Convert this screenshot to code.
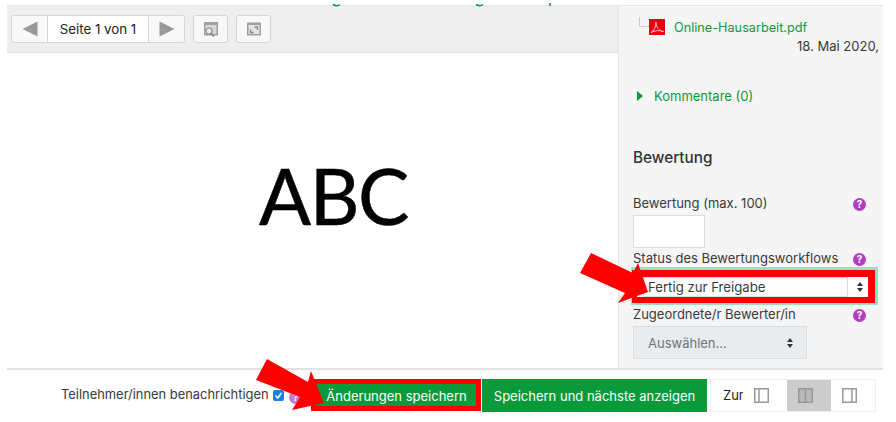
<div class="page">
  <div class="main">
    <section class="viewer">
      <svg class="cutoff" width="230" height="5" viewBox="0 0 230 5" aria-hidden="true">
        <path d="M1 2.500Q5 5 8 2.500M144 2.500Q148 5 151 2.500M218 1V4" stroke="#0a9a3a" stroke-width="1.500" fill="none"/>
      </svg>
      <div class="toolbar">
        <div class="pager">
          <span class="pg-btn">
            <svg width="16" height="16" viewBox="0 0 16 16"><path d="M0.500 8 15.500 0.500V15.500Z" fill="#999"/></svg>
          </span>
          <span class="pg-label">Seite 1 von 1</span>
          <span class="pg-btn">
            <svg width="16" height="16" viewBox="0 0 16 16"><path d="M15.500 8 0.500 0.500V15.500Z" fill="#999"/></svg>
          </span>
        </div>
        <span class="tool">
          <svg width="16" height="16" viewBox="0 0 16 16">
            <rect x="1" y="1" width="14" height="13.500" fill="#a0a0a0"/>
            <rect x="2.500" y="4" width="11" height="9" fill="#d8d8d8"/>
            <circle cx="6" cy="10" r="3" fill="#eee" stroke="#888" stroke-width="1.200"/>
            <path d="M8 12.500 11 15.500" stroke="#888" stroke-width="1.500"/>
          </svg>
        </span>
        <span class="tool">
          <svg width="16" height="16" viewBox="0 0 16 16">
            <rect x="1" y="1.500" width="14" height="13" fill="#a0a0a0"/>
            <rect x="2.500" y="4" width="11" height="9" fill="#e4e4e4"/>
            <path d="M4.500 8.500V11.500H7.500M11.500 9V6H8.500" stroke="#888" stroke-width="1.400" fill="none"/>
          </svg>
        </span>
      </div>
      <div class="paper"><span class="abc">ABC</span></div>
    </section>

    <aside class="panel">
      <div class="file">
        <svg class="tree" width="10" height="11" viewBox="0 0 10 11"><path d="M.500 0V9.500H10" stroke="#ccc" fill="none"/></svg>
        <svg class="pdf" width="16" height="16" viewBox="0 0 16 16">
          <rect width="16" height="16" fill="#e8000f"/>
          <path d="M2 13.500C5 12 7 8 7 3 7 8 10 12 14.500 12.500 10 11 6 11.500 2 13.500Z" fill="none" stroke="#f6c6c6" stroke-width="1"/>
        </svg>
        <a href="#top" class="link file-link">Online-Hausarbeit.pdf</a>
      </div>
      <div class="date">18. Mai 2020,</div>
      <div class="comments">
        <svg width="6" height="10" viewBox="0 0 6 10"><path d="M0 0 6 5 0 10Z" fill="#0a9a3a"/></svg>
        <a href="#top" class="link">Kommentare (0)</a>
      </div>
      <h3>Bewertung</h3>
      <div class="field-head first">
        <span>Bewertung (max. 100)</span>
        <span class="help">?</span>
      </div>
      <div class="grade"></div>
      <div class="field-head status-head">
        <span>Status des Bewertungsworkflows</span>
        <span class="help">?</span>
      </div>
      <div class="select-wrap">
        <div class="status-select">
          <span class="status-value">Fertig zur Freigabe</span>
          <span class="updown"></span>
        </div>
      </div>
      <div class="field-head">
        <span>Zugeordnete/r Bewerter/in</span>
        <span class="help">?</span>
      </div>
      <div class="assign">
        <span>Auswählen...</span>
        <span class="updown"></span>
      </div>
    </aside>
  </div>

  <footer class="bottom">
    <span class="notify">Teilnehmer/innen benachrichtigen</span>
    <span class="check">
      <svg width="11" height="11" viewBox="0 0 11 11"><rect width="11" height="11" rx="2" fill="#1a7fe8"/><path d="M2.500 5.500 4.700 8 8.500 3" stroke="#fff" stroke-width="1.500" fill="none"/></svg>
      <span class="help foot-help">?</span>
    </span>
    <span class="save-frame"><button class="green">Änderungen speichern</button></span>
    <button class="green next">Speichern und nächste anzeigen</button>
    <div class="reset">Zur</div>
    <div class="views">
      <span class="view">
        <svg width="15" height="15" viewBox="0 0 15 15"><rect x=".750" y=".750" width="13.500" height="13.500" fill="none" stroke="#999" stroke-width="1.500"/><path d="M5 1V14" stroke="#999" stroke-width="1.500"/></svg>
      </span>
      <span class="view active">
        <svg width="15" height="15" viewBox="0 0 15 15"><rect x=".750" y=".750" width="13.500" height="13.500" fill="none" stroke="#999" stroke-width="1.500"/><path d="M7.500 1V14" stroke="#999" stroke-width="1.500"/><rect x="1" y="1" width="13" height="13" fill="#999" opacity=".35"/></svg>
      </span>
      <span class="view">
        <svg width="15" height="15" viewBox="0 0 15 15"><rect x=".750" y=".750" width="13.500" height="13.500" fill="none" stroke="#999" stroke-width="1.500"/><path d="M10 1V14" stroke="#999" stroke-width="1.500"/></svg>
      </span>
    </div>
  </footer>

  <svg class="arrow arrow-status" width="70" height="54" viewBox="0 0 70 54"><path d="M11 1 53 21 58 11 68 40 38 51 45 41 0 21Z" fill="#f00"/></svg>
  <svg class="arrow arrow-save" width="70" height="54" viewBox="0 0 70 54"><path d="M11 1 52 24 55 13 68 45 36 52 44 39 0 22Z" fill="#f00"/></svg>
</div>

<style>
  :global(body) {
    margin: 0;
    background: #fff;
  }
  .page {
    position: relative;
    width: 896px;
    height: 422px;
    overflow: hidden;
    padding: 5px 13px 0 7px;
    box-sizing: border-box;
    font-family: "Inter", "Liberation Sans", sans-serif;
    font-size: 13px;
    color: #373a3c;
  }
  .main {
    display: flex;
    height: 365px;
    border-top: 1px solid #e6e6e6;
    border-bottom: 2px solid #e2e2e2;
    box-sizing: border-box;
  }
  .viewer {
    width: 611px;
    flex: none;
    display: flex;
    flex-direction: column;
    position: relative;
  }
  .cutoff {
    position: absolute;
    top: -4px;
    left: 325px;
  }
  .toolbar {
    height: 47px;
    flex: none;
    background: #eee;
    border-bottom: 1px solid #e3e3e3;
    display: flex;
    align-items: center;
    gap: 7px;
    padding: 0 0 0 4px;
    box-sizing: border-box;
  }
  .pager {
    display: flex;
    align-items: stretch;
    height: 28px;
    background: #fff;
    border: 1px solid #d5d5d5;
    border-radius: 3px;
    margin-right: 1px;
    box-sizing: border-box;
  }
  .pg-btn {
    width: 35px;
    display: flex;
    align-items: center;
    justify-content: center;
    background: #f8f8f8;
    border-radius: 3px;
  }
  .pg-label {
    width: 102px;
    box-sizing: border-box;
    text-align: center;
    line-height: 26px;
    font-size: 13.300px;
    color: #222;
    background: #fff;
    border-left: 1px solid #d5d5d5;
    border-right: 1px solid #d5d5d5;
  }
  .tool {
    width: 35px;
    height: 28px;
    background: #f8f8f8;
    border: 1px solid #d5d5d5;
    border-radius: 3px;
    box-sizing: border-box;
    display: flex;
    align-items: center;
    justify-content: center;
    margin-right: 1px;
  }
  .paper {
    flex: 1;
    display: flex;
    align-items: center;
    justify-content: center;
    background: #fff;
    padding-bottom: 30px;
  }
  .abc {
    font-family: "Lato", "Open Sans", sans-serif;
    font-size: 77px;
    letter-spacing: -1.500px;
    line-height: 1;
    color: #000;
    margin-left: 42px;
    -webkit-text-stroke: 0.500px #000;
  }
  .panel {
    flex: 1;
    background: #f5f5f5;
    border-left: 1px solid #e6e6e6;
    padding: 0 0 0 14px;
    box-sizing: border-box;
    min-width: 0;
  }
  .link {
    color: #0a9a3a;
    text-decoration: none;
    font-size: 13px;
  }
  .file-link {
    font-size: 12.700px;
  }
  .file {
    display: flex;
    align-items: center;
    margin: 9px 0 0 6px;
    height: 24px;
  }
  .tree {
    margin: -9px 0 0 0;
  }
  .pdf {
    margin-right: 9px;
  }
  .date {
    text-align: right;
    height: 14px;
    line-height: 14px;
    padding-right: 4px;
    white-space: nowrap;
  }
  .comments {
    display: flex;
    align-items: center;
    gap: 11px;
    margin: 33px 0 0 4px;
    height: 20px;
  }
  h3 {
    font-size: 15.300px;
    font-weight: 500;
    margin: 42px 0 0;
    line-height: 20px;
    color: #333;
  }
  .field-head {
    display: flex;
    justify-content: space-between;
    align-items: center;
    height: 18px;
    padding-right: 17px;
  }
  .field-head.first {
    margin-top: 26px;
  }
  .field-head.status-head {
    margin-top: 1px;
  }
  .help {
    width: 13px;
    height: 13px;
    border-radius: 50%;
    background: #ad3fc0;
    color: #fff;
    font-size: 10px;
    font-weight: 700;
    line-height: 13px;
    text-align: center;
    margin-top: 2px;
  }
  .foot-help {
    flex: none;
    margin-top: 4px;
    opacity: 0.700;
  }
  .grade {
    width: 72px;
    height: 33px;
    margin-top: 3px;
    background: #fff;
    border: 1px solid #d8dde2;
    box-sizing: border-box;
  }
  .select-wrap {
    margin-left: -2px;
    width: 247px;
    height: 38px;
    padding: 3px 3px 2px 1px;
    box-sizing: border-box;
    background: #8fe6bd;
  }
  .status-select {
    height: 33px;
    border-style: solid;
    border-color: #f00;
    border-width: 7px 7px 6px 5px;
    padding: 0 4px 0 6px;
    background: #fff;
    box-sizing: border-box;
    display: flex;
    align-items: center;
    gap: 9px;
  }
  .status-value {
    flex: 1;
    height: 20px;
    line-height: 19px;
    font-size: 13.200px;
    padding-left: 4px;
    border: 1px solid #ddd;
    box-sizing: border-box;
  }
  .assign {
    width: 174px;
    height: 33px;
    margin-top: 3px;
    padding: 0 12px 0 14px;
    background: #e9ecef;
    border: 1px solid #d8dde2;
    box-sizing: border-box;
    color: #6c757d;
    display: flex;
    align-items: center;
    justify-content: space-between;
  }
  .updown {
    position: relative;
    width: 7px;
    height: 10px;
    flex: none;
  }
  .updown::before,
  .updown::after {
    content: "";
    position: absolute;
    left: 0;
    border-left: 3.500px solid transparent;
    border-right: 3.500px solid transparent;
  }
  .updown::before {
    top: 0;
    border-bottom: 4px solid #333;
  }
  .updown::after {
    bottom: 0;
    border-top: 4px solid #333;
  }
  .bottom {
    display: flex;
    align-items: flex-start;
    height: 33px;
    margin-top: 9px;
    padding-left: 54px;
  }
  .notify {
    width: 212px;
    flex: none;
    font-size: 12.900px;
    line-height: 32px;
    white-space: nowrap;
  }
  .check {
    width: 38px;
    height: 33px;
    flex: none;
    display: flex;
    align-items: center;
    gap: 5px;
  }
  .green {
    background: #0a9a3a;
    color: #fff;
    border: 0;
    font: inherit;
    font-size: 13px;
    padding: 1px 0 0;
    white-space: nowrap;
  }
  .save-frame {
    flex: none;
    width: 170px;
    height: 32px;
    padding: 5px;
    background: #f00;
    box-sizing: border-box;
    display: flex;
  }
  .save-frame .green {
    flex: 1;
    height: 22px;
    padding-left: 1px;
  }
  .next {
    width: 225px;
    height: 33px;
    flex: none;
    margin-left: 1px;
  }
  .reset {
    width: 33px;
    height: 33px;
    flex: none;
    line-height: 31px;
    padding-left: 12px;
    box-sizing: border-box;
    overflow: hidden;
    color: #222;
    border: 1px solid #eee;
    border-right: 0;
    margin-left: 3px;
  }
  .views {
    display: flex;
    flex: none;
    height: 33px;
    border: 1px solid #eee;
    border-left: 0;
    box-sizing: border-box;
  }
  .view {
    width: 44px;
    padding-right: 7px;
    box-sizing: border-box;
    display: flex;
    align-items: center;
    justify-content: center;
  }
  .view.active {
    background: #ccc;
  }
  .arrow {
    position: absolute;
  }
  .arrow-status {
    left: 580px;
    top: 252px;
  }
  .arrow-save {
    left: 256px;
    top: 358px;
  }
</style>
